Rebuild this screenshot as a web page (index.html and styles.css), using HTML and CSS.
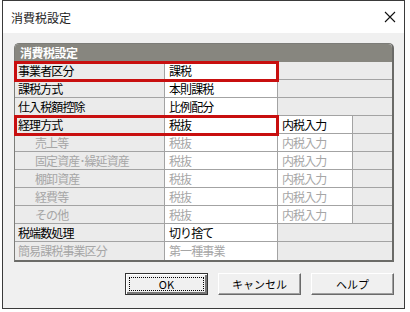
FILE: index.html
```html
<!DOCTYPE html>
<html lang="ja">
<head>
    <meta charset="UTF-8">
    <title>消費税設定</title>
    <link rel="stylesheet" href="styles.css">
</head>
<body>
<div class="window">
    <div class="titlebar">
        <span class="title">消費税設定</span>
        <svg class="close" width="12" height="12" viewBox="0 0 12 12">
            <path d="M1 1 L11 11 M11 1 L1 11" stroke="#111" stroke-width="1.1" fill="none"/>
        </svg>
    </div>
    <div class="content">
        <div class="panel">
            <div class="panel-head">消費税設定</div>

            <div class="row">
                <div class="cell label">事業者区分</div>
                <div class="cell value">課税</div>
                <div class="cell empty wide"></div>
            </div>
            <div class="row">
                <div class="cell label">課税方式</div>
                <div class="cell value">本則課税</div>
                <div class="cell empty wide"></div>
            </div>
            <div class="row">
                <div class="cell label">仕入税額控除</div>
                <div class="cell value">比例配分</div>
                <div class="cell empty wide"></div>
            </div>
            <div class="row">
                <div class="cell label">経理方式</div>
                <div class="cell value">税抜</div>
                <div class="cell value">内税入力</div>
                <div class="cell empty"></div>
            </div>
            <div class="row off">
                <div class="cell label sub">売上等</div>
                <div class="cell value">税抜</div>
                <div class="cell value">内税入力</div>
                <div class="cell empty"></div>
            </div>
            <div class="row off">
                <div class="cell label sub">固定資産･繰延資産</div>
                <div class="cell value">税抜</div>
                <div class="cell value">内税入力</div>
                <div class="cell empty"></div>
            </div>
            <div class="row off">
                <div class="cell label sub">棚卸資産</div>
                <div class="cell value">税抜</div>
                <div class="cell value">内税入力</div>
                <div class="cell empty"></div>
            </div>
            <div class="row off">
                <div class="cell label sub">経費等</div>
                <div class="cell value">税抜</div>
                <div class="cell value">内税入力</div>
                <div class="cell empty"></div>
            </div>
            <div class="row off">
                <div class="cell label sub">その他</div>
                <div class="cell value">税抜</div>
                <div class="cell value">内税入力</div>
                <div class="cell empty"></div>
            </div>
            <div class="row">
                <div class="cell label">税端数処理</div>
                <div class="cell value">切り捨て</div>
                <div class="cell empty wide"></div>
            </div>
            <div class="row off last">
                <div class="cell label">簡易課税事業区分</div>
                <div class="cell value">第一種事業</div>
                <div class="cell empty wide"></div>
            </div>

            <!-- red highlight frames -->
            <div class="mark mark-first"></div>
            <div class="mark mark-second"></div>
        </div>

        <div class="buttons">
            <button class="btn default"><span class="focus">OK</span></button>
            <button class="btn">キャンセル</button>
            <button class="btn">ヘルプ</button>
        </div>
    </div>
</div>
</body>
</html>
```

FILE: styles.css
```css
body {
    margin: 0;
    background: #ffffff;
    font-family: "Noto Sans CJK JP", "DejaVu Sans", sans-serif;
    font-size: 12px;
    color: #000;
}

.window {
    margin-left: 2px;
    width: 403px;
    height: 309px;
    box-sizing: border-box;
    border: 1px solid #3a3a3a;
    background: #f0f0f0;
    display: flex;
    flex-direction: column;
}

.titlebar {
    height: 32px;
    background: #ffffff;
    display: flex;
    align-items: center;
    justify-content: space-between;
    padding: 0 8px 0 8px;
}

.title {
    font-size: 12px;
    color: #222;
}

.close {
    display: block;
}

.content {
    padding: 10px 0 0 11px;
}

.panel {
    position: relative;
    width: 380px;
    box-sizing: border-box;
    border: 1px solid #7c7c78;
    border-right: 2px solid #6b6b68;
    border-bottom: 2px solid #6b6b68;
    border-radius: 5px 5px 0 0;
    background: #ebebeb;
}

.panel-head {
    height: 18px;
    line-height: 18px;
    background: #87867f;
    color: #fff;
    font-weight: bold;
    letter-spacing: -0.5px;
    padding-left: 5px;
    border-radius: 4px 4px 0 0;
}

.row {
    display: grid;
    grid-template-columns: 150px 113px 75px 39px;
    height: 18px;
}

.cell {
    box-sizing: border-box;
    height: 18px;
    line-height: 17px;
    letter-spacing: -0.9px;
    border-bottom: 1px solid #a3a3a3;
    border-right: 1px solid #a3a3a3;
    white-space: nowrap;
    overflow: hidden;
}

.row.last .cell {
    border-bottom: none;
}

.label {
    background: #ebebeb;
    padding-left: 3px;
}

.label.sub {
    padding-left: 20px;
}

.value {
    background: #fff;
    padding-left: 4px;
}

.empty {
    background: #ebebeb;
}

.empty.wide {
    grid-column: 3 / 5;
}

.cell:last-child {
    border-right: none;
}

.row.off .cell {
    color: #a6a6a6;
}

.mark {
    position: absolute;
    left: -1px;
    width: 265px;
    height: 21px;
    box-sizing: border-box;
    border: 3px solid #c80f0f;
}

.mark-first {
    top: 17px;
}

.mark-second {
    top: 71px;
}

.buttons {
    display: flex;
    justify-content: flex-end;
    gap: 10px;
    margin-top: 11px;
    width: 380px;
}

.btn {
    width: 83px;
    height: 22px;
    box-sizing: border-box;
    padding: 0;
    font-family: "Noto Sans CJK JP", "DejaVu Sans", sans-serif;
    font-size: 11px;
    color: #000;
    background: #f0f0f0;
    border: 1px solid;
    border-color: #fff #6a6a6a #6a6a6a #fff;
    box-shadow: inset -1px -1px 0 #a0a0a0;
}

.btn.default {
    border: 1px solid #333;
    box-shadow: inset 1px 1px 0 #fff, inset -2px -2px 0 #777;
    padding: 3px;
}

.focus {
    display: block;
    height: 100%;
    box-sizing: border-box;
    border: 1px dotted #000;
    line-height: 13px;
}
```
